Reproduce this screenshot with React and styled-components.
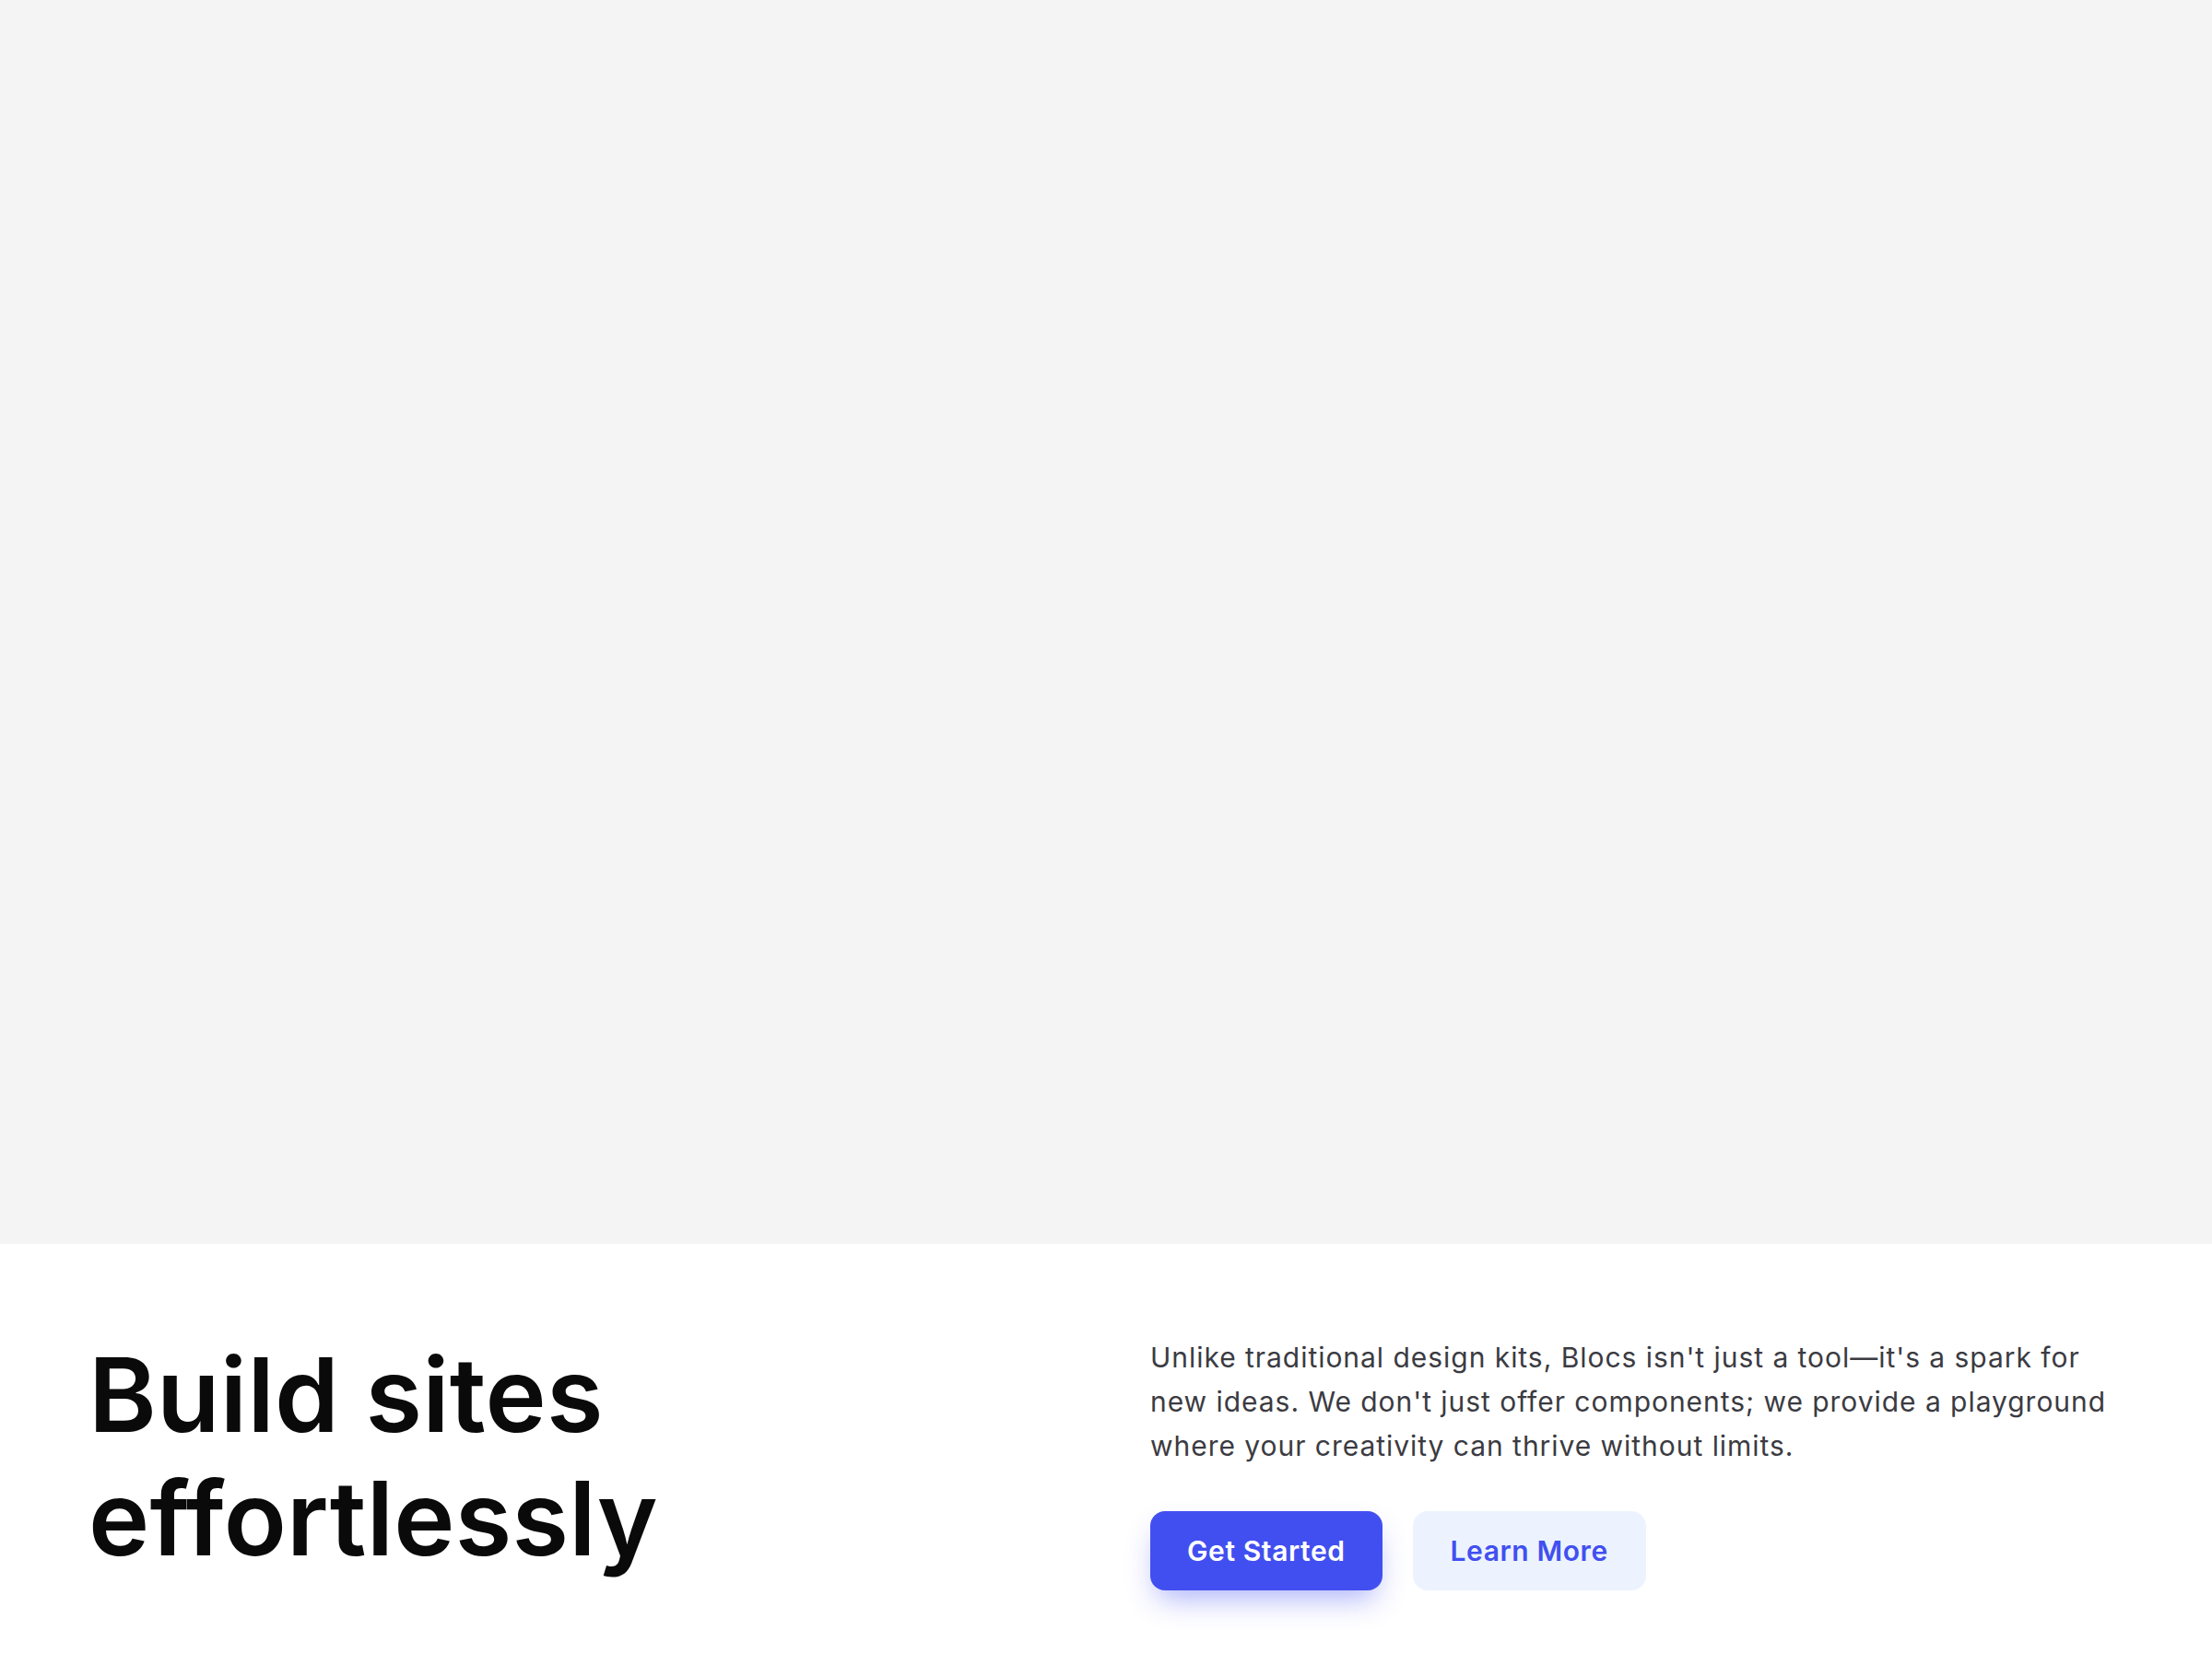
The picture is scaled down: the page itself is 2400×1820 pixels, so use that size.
import React from "react";
import styled, { createGlobalStyle } from "styled-components";

const Global = createGlobalStyle`
  html, body { margin: 0; padding: 0; background: #ffffff; }
  body { font-family: Inter, "Noto Sans", sans-serif; -webkit-font-smoothing: antialiased; }
  * { box-sizing: border-box; }
`;

const Page = styled.main`
  width: 100%;
  display: flex;
  flex-direction: column;
`;

const Hero = styled.div`
  width: 100%;
  height: 1350px;
  background: #f4f4f4;
`;

const Section = styled.section`
  display: grid;
  grid-template-columns: 1fr 1fr;
  column-gap: 96px;
  padding: 96px 96px 94px;
`;

const Heading = styled.h1`
  margin: 0;
  font-family: Inter, sans-serif;
  font-weight: 600;
  font-size: 112px;
  line-height: 1.2;
  letter-spacing: 0.002em;
  color: #0a0a0a;
`;

const Side = styled.div`
  display: flex;
  flex-direction: column;
  gap: 47px;
  padding-top: 3px;
`;

const Text = styled.p`
  margin: 0;
  font-size: 30px;
  line-height: 48px;
  letter-spacing: 0.032em;
  color: #3b3b42;
`;

const Actions = styled.div`
  display: flex;
  gap: 33px;
`;

const Button = styled.button`
  height: 86px;
  min-width: ${(p) => (p.$primary ? "251px" : "253px")};
  padding: 0 40px;
  border: none;
  border-radius: 16px;
  font-family: Inter, sans-serif;
  font-size: 30px;
  font-weight: 600;
  letter-spacing: 0.02em;
  cursor: pointer;
  background: ${(p) => (p.$primary ? "#424ff0" : "#ecf3fe")};
  color: ${(p) => (p.$primary ? "#ffffff" : "#424ff0")};
  box-shadow: ${(p) =>
    p.$primary ? "0 16px 32px -8px rgba(66, 79, 240, 0.45)" : "none"};
`;

export default function App() {
  return (
    <Page>
      <Global />
      <Hero />
      <Section>
        <Heading>
          Build sites
          <br />
          effortlessly
        </Heading>
        <Side>
          <Text>
            Unlike traditional design kits, Blocs isn't just a tool—it's a spark
            for new ideas. We don't just offer components; we provide a
            playground where your creativity can thrive without limits.
          </Text>
          <Actions>
            <Button $primary>Get Started</Button>
            <Button>Learn More</Button>
          </Actions>
        </Side>
      </Section>
    </Page>
  );
}
